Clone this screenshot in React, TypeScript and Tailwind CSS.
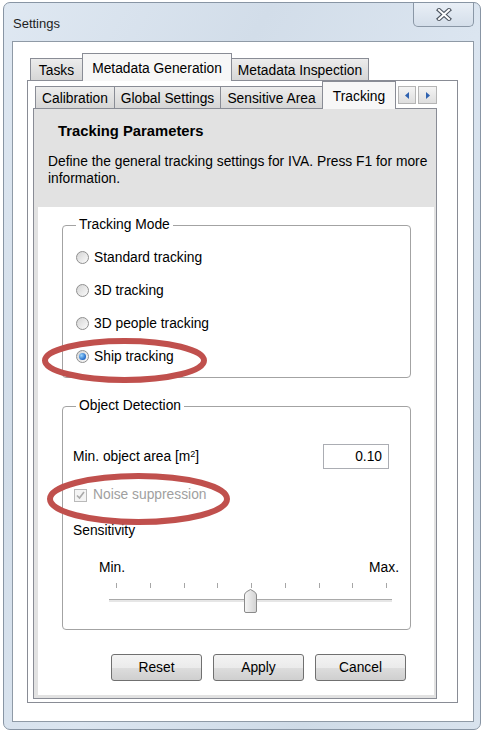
import React from "react";

function TopTab({ label, selected, w, first }: { label: string; selected?: boolean; w: string; first?: boolean }) {
  if (selected) {
    return (
      <div className={`relative z-10 -mb-px ${first ? "" : "-ml-px"} flex h-[28px] ${w} items-center justify-center border border-b-0 border-[#898c95] bg-[#f7f7f7] pt-[3px]`}>
        {label}
      </div>
    );
  }
  return (
    <div className={`${first ? "" : "-ml-px"} flex h-[22px] ${w} items-center justify-center border border-b-0 border-[#898c95] bg-[linear-gradient(#ececec,#d6d6d6)] pt-[4px]`}>
      {label}
    </div>
  );
}

function Radio({ checked }: { checked?: boolean }) {
  return (
    <span className="flex h-[13px] w-[13px] shrink-0 items-center justify-center rounded-full border border-[#8f8f8f] bg-[linear-gradient(135deg,#d4d4d4,#fbfbfb)]">
      {checked && (
        <span className="h-[7px] w-[7px] rounded-full bg-[radial-gradient(circle_at_35%_35%,#9ad6ff,#1a62c2_75%)]" />
      )}
    </span>
  );
}

function Button({ label }: { label: string }) {
  return (
    <div className="flex h-[27px] w-[91px] items-center justify-center rounded-[3px] border border-[#707070] bg-[linear-gradient(#f3f3f3_0%,#ebebeb_50%,#dddddd_51%,#cfcfcf_100%)] pt-[2px]">
      {label}
    </div>
  );
}

export default function App() {
  const ticks = [0, 1, 2, 3, 4, 5, 6, 7, 8];
  return (
    <div className="relative h-[734px] w-[484px] bg-white pl-[3px] pt-[2px] font-['Liberation_Sans',Arial,sans-serif] text-[13.8px] text-black">
      <div className="flex h-[728px] w-[478px] flex-col rounded-[7px] border border-[#8895a4] bg-[linear-gradient(120deg,#dfe8f2_0%,#d2dde9_30%,#dbe5f0_55%,#cfdbe7_80%,#d9e3ee_100%)]">
        {/* title bar */}
        <div className="flex h-[38px] items-start justify-between">
          <span className="ml-[9px] mt-[13px] text-[13px] leading-[16px] text-[#1e1e1e]">Settings</span>
          <div className="mr-[6px] flex h-[24px] w-[61px] items-center justify-center rounded-b-[5px] border border-t-0 border-[#8a97a6] bg-[linear-gradient(#e9eff6,#d4deea)]">
            <svg width="16" height="13" viewBox="0 0 16 13">
              <path d="M3 2 L13 11 M13 2 L3 11" stroke="#4d5560" strokeWidth="4.2" strokeLinecap="square" fill="none" />
              <path d="M3 2 L13 11 M13 2 L3 11" stroke="#ffffff" strokeWidth="2" strokeLinecap="square" fill="none" />
            </svg>
          </div>
        </div>

        {/* client area */}
        <div className="ml-[8px] h-[681px] w-[462px] border border-[#8f9aa6] bg-white pl-[14px] pt-[11px]">
          <div className="w-[431px]">
            {/* top tabs */}
            <div className="flex h-[27px] items-end pl-[3px]">
              <TopTab label="Tasks" w="w-[53px]" first />
              <TopTab label="Metadata Generation" w="w-[150px]" selected />
              <TopTab label="Metadata Inspection" w="w-[138px]" />
            </div>
            {/* outer panel */}
            <div className="h-[623px] border border-[#898c95] bg-white pl-[5px] pr-[20px]">
              {/* inner tabs */}
              <div className="flex h-[27px] items-end pl-[2px]">
                <TopTab label="Calibration" w="w-[80px]" first />
                <TopTab label="Global Settings" w="w-[107px]" />
                <TopTab label="Sensitive Area" w="w-[103px]" />
                <TopTab label="Tracking" w="w-[74px]" selected />
                <div className="mb-[4px] ml-auto flex gap-[2px] self-end">
                  <div className="flex h-[18px] w-[18px] items-center justify-center border border-[#b5b5b5] bg-[linear-gradient(#f4f4f4,#dedede)]">
                    <svg width="5" height="7" viewBox="0 0 5 7">
                      <path d="M4 0 L0 3.5 L4 7 Z" fill="#2f62b0" />
                    </svg>
                  </div>
                  <div className="flex h-[18px] w-[19px] items-center justify-center border border-[#b5b5b5] bg-[linear-gradient(#f4f4f4,#dedede)]">
                    <svg width="5" height="7" viewBox="0 0 5 7">
                      <path d="M1 0 L5 3.5 L1 7 Z" fill="#2f62b0" />
                    </svg>
                  </div>
                </div>
              </div>

              {/* inner panel */}
              <div className="flex h-[591px] flex-col border border-[#898c95] bg-[#e2e2e2] pb-[3px] pl-[4px] pr-[2px]">
                {/* header */}
                <div className="h-[98px] shrink-0 pt-[14px]">
                  <div className="ml-[20px] text-[14.8px] font-bold leading-[16px]">Tracking Parameters</div>
                  <div className="ml-[10px] mt-[14px] leading-[17px]">
                    Define the general tracking settings for IVA. Press F1 for more
                    <br />
                    information.
                  </div>
                </div>

                {/* body */}
                <div className="flex-1 bg-white pt-[10px]">
                  <fieldset className="ml-[24px] w-[349px] rounded-[4px] border border-[#a3a3a3] pb-[4px] pl-[13px]">
                    <legend className="px-[3px] leading-[16px]">Tracking Mode</legend>
                    <div className="pt-[8px]">
                      {["Standard tracking", "3D tracking", "3D people tracking", "Ship tracking"].map((t, i) => (
                        <div key={t} className="flex h-[33px] items-center gap-[5px]">
                          <Radio checked={i === 3} />
                          <span className="pt-[1px] leading-[16px]">{t}</span>
                        </div>
                      ))}
                    </div>
                  </fieldset>

                  <fieldset className="ml-[24px] mt-[20px] w-[349px] rounded-[4px] border border-[#a3a3a3] pb-[16px] pl-[10px] pr-[11px]">
                    <legend className="ml-[3px] px-[3px] leading-[16px]">Object Detection</legend>
                    <div className="flex items-center justify-between pr-[10px] pt-[30px]">
                      <span className="pt-[1px] leading-[16px]">
                        Min. object area [m<sup className="text-[9px]">2</sup>]
                      </span>
                      <div className="flex h-[25px] w-[66px] items-center justify-end border border-[#abadb3] bg-white pr-[6px] pt-[1px]">
                        0.10
                      </div>
                    </div>
                    <div className="mt-[17px] flex h-[18px] items-center gap-[6px] pl-[1px]">
                      <span className="flex h-[13px] w-[13px] items-center justify-center border border-[#b9b9b9] bg-[#f4f4f4]">
                        <svg width="11" height="11" viewBox="0 0 11 11">
                          <path d="M2 5.5 L4.5 8 L9 2" stroke="#a9a9a9" strokeWidth="1.6" fill="none" />
                        </svg>
                      </span>
                      <span className="leading-[16px] text-[#a0a0a0]">Noise suppression</span>
                    </div>
                    <div className="mt-[19px] leading-[16px]">Sensitivity</div>
                    <div className="ml-[26px]">
                      <div className="mt-[21px] flex justify-between leading-[16px]">
                        <span>Min.</span>
                        <span>Max.</span>
                      </div>
                      <div className="mt-[7px] flex h-[5px] justify-between pl-[17px] pr-[12px]">
                        {ticks.map((t) => (
                          <span key={t} className="h-[5px] w-px bg-[#a6a6a6]" />
                        ))}
                      </div>
                      <div className="relative mt-[1px] h-[24px]">
                        <div className="absolute left-[10px] right-[7px] top-[10px] h-[3px] border-t border-[#a9a9a9] bg-[#e6e6e6]" />
                        <svg className="absolute left-[145px] top-0" width="13" height="24" viewBox="0 0 13 24">
                          <defs>
                            <linearGradient id="thumb" x1="0" x2="1" y1="0" y2="0">
                              <stop offset="0" stopColor="#f6f6f6" />
                              <stop offset="1" stopColor="#d2d2d2" />
                            </linearGradient>
                          </defs>
                          <path d="M0.5 6 Q0.5 4 3 2.5 L6.5 0.5 L10 2.5 Q12.5 4 12.5 6 L12.5 22 Q12.5 23.5 11 23.5 L2 23.5 Q0.5 23.5 0.5 22 Z" fill="url(#thumb)" stroke="#8a8a8a" />
                        </svg>
                      </div>
                    </div>
                  </fieldset>

                  <div className="mt-[24px] flex justify-end gap-[11px] pr-[28px]">
                    <Button label="Reset" />
                    <Button label="Apply" />
                    <Button label="Cancel" />
                  </div>
                </div>
              </div>
            </div>
          </div>
        </div>
      </div>

      {/* annotation ellipses */}
      <svg className="pointer-events-none absolute left-0 top-0" width="484" height="734" viewBox="0 0 484 734">
        <ellipse cx="124.5" cy="360.5" rx="79.5" ry="19.5" fill="none" stroke="#c0504d" strokeWidth="6" />
        <ellipse cx="138.5" cy="499" rx="88.5" ry="23" fill="none" stroke="#c0504d" strokeWidth="6" />
      </svg>
    </div>
  );
}
